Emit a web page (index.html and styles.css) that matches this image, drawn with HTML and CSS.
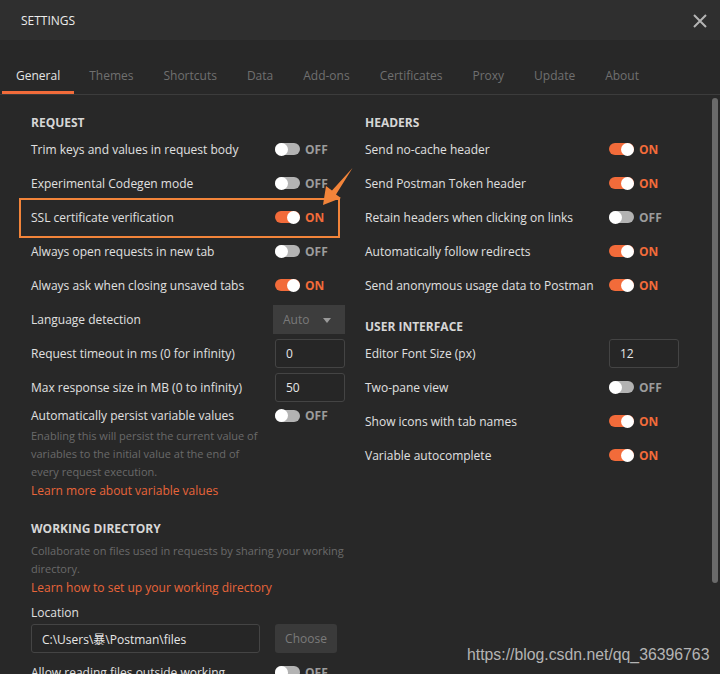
FILE: index.html
```html
<!DOCTYPE html>
<html>
<head>
<meta charset="utf-8">
<link rel="stylesheet" href="styles.css">
</head>
<body>
<div class="modal">
  <header class="head">
    <span class="title">SETTINGS</span>
    <svg class="close" width="16" height="16" viewBox="0 0 16 16"><path d="M2 2L14 14M14 2L2 14" stroke="#b4b4b4" stroke-width="2" fill="none"/></svg>
  </header>
  <nav class="tabs">
    <span class="tab active">General</span>
    <span class="tab">Themes</span>
    <span class="tab">Shortcuts</span>
    <span class="tab">Data</span>
    <span class="tab">Add-ons</span>
    <span class="tab">Certificates</span>
    <span class="tab">Proxy</span>
    <span class="tab">Update</span>
    <span class="tab">About</span>
  </nav>
  <div class="main">
    <div class="content">
      <div class="col">
        <div class="sec">REQUEST</div>
        <div class="row"><span class="lbl">Trim keys and values in request body</span><span class="tg"></span><b class="st">OFF</b></div>
        <div class="row"><span class="lbl">Experimental Codegen mode</span><span class="tg"></span><b class="st">OFF</b></div>
        <div class="row"><span class="lbl">SSL certificate verification</span><span class="tg on"></span><b class="st on">ON</b></div>
        <div class="row"><span class="lbl">Always open requests in new tab</span><span class="tg"></span><b class="st">OFF</b></div>
        <div class="row"><span class="lbl">Always ask when closing unsaved tabs</span><span class="tg on"></span><b class="st on">ON</b></div>
        <div class="row"><span class="lbl">Language detection</span><span class="select">Auto<i class="caret"></i></span></div>
        <div class="row"><span class="lbl">Request timeout in ms (0 for infinity)</span><span class="input">0</span></div>
        <div class="row"><span class="lbl">Max response size in MB (0 to infinity)</span><span class="input">50</span></div>
        <div class="row short"><span class="lbl">Automatically persist variable values</span><span class="tg"></span><b class="st">OFF</b></div>
        <p class="desc">Enabling this will persist the current value of<br>variables to the initial value at the end of<br>every request execution.</p>
        <a class="link">Learn more about variable values</a>
        <div class="sec sec2">WORKING DIRECTORY</div>
        <p class="desc">Collaborate on files used in requests by sharing your working<br>directory.</p>
        <a class="link">Learn how to set up your working directory</a>
        <div class="loclbl">Location</div>
        <div class="locrow"><span class="path">C:\Users\暴\Postman\files</span><span class="btn">Choose</span></div>
        <div class="row"><span class="lbl">Allow reading files outside working</span><span class="tg"></span><b class="st">OFF</b></div>
      </div>
      <div class="col">
        <div class="sec">HEADERS</div>
        <div class="row"><span class="lbl">Send no-cache header</span><span class="tg on"></span><b class="st on">ON</b></div>
        <div class="row"><span class="lbl">Send Postman Token header</span><span class="tg on"></span><b class="st on">ON</b></div>
        <div class="row"><span class="lbl">Retain headers when clicking on links</span><span class="tg"></span><b class="st">OFF</b></div>
        <div class="row"><span class="lbl">Automatically follow redirects</span><span class="tg on"></span><b class="st on">ON</b></div>
        <div class="row"><span class="lbl">Send anonymous usage data to Postman</span><span class="tg on"></span><b class="st on">ON</b></div>
        <div class="sec sec3">USER INTERFACE</div>
        <div class="row"><span class="lbl">Editor Font Size (px)</span><span class="input">12</span></div>
        <div class="row"><span class="lbl">Two-pane view</span><span class="tg"></span><b class="st">OFF</b></div>
        <div class="row"><span class="lbl">Show icons with tab names</span><span class="tg on"></span><b class="st on">ON</b></div>
        <div class="row"><span class="lbl">Variable autocomplete</span><span class="tg on"></span><b class="st on">ON</b></div>
      </div>
    </div>
    <div class="scroll"><div class="thumb"></div></div>
  </div>
  <div class="mark"></div>
  <svg class="arrow" width="40" height="45" viewBox="0 0 40 45"><polygon points="5,40 8,21 14,25.5 34.5,3 18,29.5 23,33" fill="#f2843a"/></svg>
  <div class="wm">https://blog.csdn.net/qq_36396763</div>
</div>
</body>
</html>
```

FILE: styles.css
```css
* { box-sizing: border-box; }
html, body { margin: 0; padding: 0; }
body {
  width: 720px;
  height: 674px;
  overflow: hidden;
  background: #282828;
  font-family: "Open Sans", "Noto Sans CJK SC", sans-serif;
  font-size: 12px;
  color: #e0e0e0;
}
.modal { position: relative; width: 720px; height: 674px; overflow: hidden; }
.head {
  height: 40px;
  background: #2f2f2f;
  display: flex;
  align-items: center;
  justify-content: space-between;
  padding: 1px 12px 0 21px;
}
.title { color: #ececec; font-size: 12px; letter-spacing: 0; }
.close { display: block; }
.tabs {
  height: 55px;
  display: flex;
  align-items: flex-end;
  border-bottom: 1px solid #3c3c3c;
  padding-left: 2px;
}
.tab {
  padding: 0 15px 6px;
  line-height: 18px;
  border-bottom: 3px solid transparent;
  color: #707070;
  font-size: 12px;
}
.tab:first-child { padding: 0 14px 6px; }
.tab.active { color: #e4e4e4; border-bottom-color: #f26b3a; }
.main { display: flex; height: 579px; }
.content {
  flex: 1;
  display: grid;
  grid-template-columns: 334px 1fr;
  padding: 20px 0 0 31px;
}
.col { display: flex; flex-direction: column; }
.sec {
  font-weight: 700;
  line-height: 16px;
  height: 16px;
  color: #d6d6d6;
  margin-bottom: 1px;
}
.sec2 { margin-top: 21px; margin-bottom: 5px; }
.sec3 { margin-top: 17px; margin-bottom: 1px; }
.row { display: flex; align-items: center; height: 34px; }
.row.short { height: 23px; }
.lbl { width: 244px; flex: none; color: #e0e0e0; white-space: nowrap; }
.tg {
  position: relative;
  width: 25px;
  height: 12px;
  border-radius: 6px;
  background: #b3b3b3;
  flex: none;
}
.tg::after {
  content: "";
  position: absolute;
  left: 0;
  top: -0.5px;
  width: 13px;
  height: 13px;
  border-radius: 50%;
  background: #fff;
}
.tg.on { background: #f26b3a; }
.tg.on::after { left: 12px; }
.st { margin-left: 5px; font-weight: 700; color: #9c9c9c; }
.st.on { color: #f26b3a; }
.select {
  margin-left: -2px;
  width: 72px;
  height: 29px;
  background: #3d3d3d;
  color: #7a7a7a;
  display: flex;
  align-items: center;
  padding-left: 10px;
  position: relative;
}
.caret {
  position: absolute;
  left: 50px;
  top: 13px;
  width: 0; height: 0;
  border-left: 4px solid transparent;
  border-right: 4px solid transparent;
  border-top: 5px solid #9a9a9a;
}
.input {
  width: 70px;
  height: 29px;
  border: 1px solid #444;
  border-radius: 3px;
  background: #262626;
  display: flex;
  align-items: center;
  padding-left: 10px;
  color: #e6e6e6;
}
.desc {
  margin: 0;
  font-size: 11px;
  line-height: 18px;
  color: #6a6a6a;
  white-space: nowrap;
}
.link { color: #e8653a; line-height: 18px; display: block; margin-top: 1px; }
.loclbl { margin-top: 8px; line-height: 16px; color: #e0e0e0; }
.locrow { display: flex; margin-top: 3px; height: 29px; }
.path {
  width: 229px;
  border: 1px solid #444;
  border-radius: 3px;
  background: #262626;
  display: flex;
  align-items: center;
  padding-left: 10px;
  color: #e6e6e6;
}
.btn {
  margin-left: 15px;
  width: 62px;
  border-radius: 3px;
  background: #3a3a3a;
  color: #7a7a7a;
  display: flex;
  align-items: center;
  justify-content: center;
}
.locrow + .row { margin-top: 2px; }
.scroll { width: 6px; margin: 3px 2px 0 0; }
.thumb { width: 6px; height: 485px; border-radius: 3px; background: #6a6a6a; }
.mark {
  position: absolute;
  left: 19px;
  top: 198px;
  width: 321px;
  height: 40px;
  border: 2px solid #f2843a;
}
.arrow { position: absolute; left: 318px; top: 165px; }
.wm {
  position: absolute;
  left: 467px;
  top: 645px;
  font-family: "Liberation Sans", Arial, sans-serif;
  font-size: 15.8px;
  line-height: 20px;
  color: #b4b4b4;
}
```
